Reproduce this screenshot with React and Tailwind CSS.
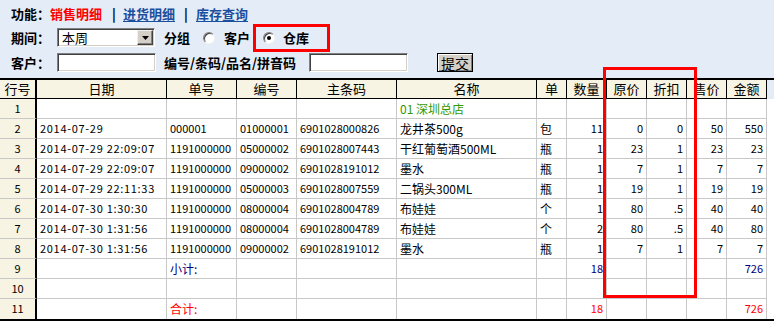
import React from "react";

const COLS = [
  "w-[37px] shrink-0",
  "w-[130px] shrink-0",
  "w-[70px] shrink-0",
  "w-[60px] shrink-0",
  "w-[100px] shrink-0",
  "w-[140px] shrink-0",
  "w-[30px] shrink-0",
  "w-[40px] shrink-0",
  "w-[40px] shrink-0",
  "w-[40px] shrink-0",
  "w-[40px] shrink-0",
  "w-[40px] shrink-0",
];

const HEADERS = ["行号", "日期", "单号", "编号", "主条码", "名称", "单", "数量", "原价", "折扣", "售价", "金额"];

const ALIGN = ["c", "l", "l", "l", "l", "l", "l", "r", "r", "r", "r", "r"];

const ROWS = [
  { cells: ["1", "", "", "", "", "01 深圳总店", "", "", "", "", "", ""], colors: { 5: "text-[#339900]" } },
  { cells: ["2", "2014-07-29", "000001", "01000001", "6901028000826", "龙井茶500g", "包", "11", "0", "0", "50", "550"] },
  { cells: ["3", "2014-07-29 22:09:07", "1191000000", "05000002", "6901028007443", "干红葡萄酒500ML", "瓶", "1", "23", "1", "23", "23"] },
  { cells: ["4", "2014-07-29 22:09:07", "1191000000", "09000002", "6901028191012", "墨水", "瓶", "1", "7", "1", "7", "7"] },
  { cells: ["5", "2014-07-29 22:11:33", "1191000000", "05000003", "6901028007559", "二锅头300ML", "瓶", "1", "19", "1", "19", "19"] },
  { cells: ["6", "2014-07-30 1:30:30", "1191000000", "08000004", "6901028004789", "布娃娃", "个", "1", "80", ".5", "40", "40"] },
  { cells: ["7", "2014-07-30 1:31:56", "1191000000", "08000004", "6901028004789", "布娃娃", "个", "2", "80", ".5", "40", "80"] },
  { cells: ["8", "2014-07-30 1:31:56", "1191000000", "09000002", "6901028191012", "墨水", "瓶", "1", "7", "1", "7", "7"] },
  { cells: ["9", "", "小计:", "", "", "", "", "18", "", "", "", "726"], colors: { 2: "text-[#000080]", 7: "text-[#000080]", 11: "text-[#000080]" } },
  { cells: ["10", "", "", "", "", "", "", "", "", "", "", ""] },
  { cells: ["11", "", "合计:", "", "", "", "", "18", "", "", "", "726"], colors: { 2: "text-[#ff0000]", 7: "text-[#ff0000]", 11: "text-[#ff0000]" } },
];

const isAscii = (s) => /^[\x20-\x7e]+$/.test(s);

function Radio({ checked }) {
  return (
    <span className="w-[12px] h-[12px] shrink-0 rounded-full bg-white border border-t-[#808080] border-l-[#808080] border-b-[#f4f4f4] border-r-[#f4f4f4] shadow-[inset_1px_1px_0_#404040] flex items-center justify-center">
      {checked && <span className="w-[4px] h-[4px] rounded-full bg-black" />}
    </span>
  );
}

function Input({ w }) {
  return (
    <span
      className={
        w +
        " h-[19px] shrink-0 bg-white border border-t-[#808080] border-l-[#808080] border-b-white border-r-white shadow-[inset_1px_1px_0_#404040,inset_-1px_-1px_0_#d4d0c8]"
      }
    />
  );
}

export default function App() {
  return (
    <div
      className="relative w-[774px] h-[327px] bg-white overflow-hidden text-black"
      style={{ fontFamily: '"Noto Sans CJK SC", "Noto Sans", sans-serif' }}
    >
      <div className="h-[78px] bg-[#e4ecf7] pl-[11px] text-[13px] font-bold leading-none">
        <div className="h-[26px] flex items-center">
          <span className="w-[39px] shrink-0">功能：</span>
          <span className="w-[62px] shrink-0 text-[#ff0000]">销售明细</span>
          <span className="w-[11px] shrink-0">|</span>
          <span className="w-[61px] shrink-0 text-[#1c4e9e] underline underline-offset-2">进货明细</span>
          <span className="w-[12px] shrink-0">|</span>
          <span className="shrink-0 text-[#1c4e9e] underline underline-offset-2">库存查询</span>
        </div>
        <div className="mt-[2px] h-[19px] flex items-center">
          <span className="w-[46px] shrink-0">期间：</span>
          <span className="w-[98px] h-[19px] shrink-0 bg-white border border-t-[#808080] border-l-[#808080] border-b-white border-r-white shadow-[inset_1px_1px_0_#404040,inset_-1px_-1px_0_#d4d0c8] flex items-center justify-between pl-[4px] pr-[1px]">
            <span className="font-normal text-[13px]">本周</span>
            <span className="w-[16px] h-[15px] bg-[#d4d0c8] border border-t-[#f0f0f0] border-l-[#f0f0f0] border-b-[#404040] border-r-[#404040] shadow-[inset_-1px_-1px_0_#808080] flex items-center justify-center">
              <svg width="7" height="4" viewBox="0 0 7 4">
                <path d="M0 0h7L3.5 4z" fill="#000" />
              </svg>
            </span>
          </span>
          <span className="ml-[9px] w-[39px] shrink-0">分组</span>
          <Radio />
          <span className="ml-[9px] w-[39px] shrink-0">客户</span>
          <Radio checked />
          <span className="ml-[8px] shrink-0">仓库</span>
        </div>
        <div className="mt-[6px] h-[19px] flex items-center">
          <span className="w-[46px] shrink-0">客户：</span>
          <Input w="w-[99px]" />
          <span className="ml-[8px] w-[145px] shrink-0">编号/条码/品名/拼音码</span>
          <Input w="w-[99px]" />
          <span className="ml-[29px] w-[36px] h-[19px] shrink-0 bg-[#d4d0c8] border border-black shadow-[inset_1px_1px_0_#fff,inset_-1px_-1px_0_#808080] flex items-center justify-center font-normal text-[14px]">
            提交
          </span>
        </div>
      </div>

      <div className="h-[2px] bg-black" />
      <div className="flex h-[19px] bg-[#e4ecf7] text-[13px] leading-[18px]">
        {HEADERS.map((h, i) => (
          <div
            key={i}
            className={
              COLS[i] +
              " h-[19px] bg-[#f7f4e3] border-b border-black text-center " +
              (i === 0 ? "border-r-2" : "border-r")
            }
          >
            {h}
          </div>
        ))}
      </div>
      <div className="bg-white text-[12px] leading-[19px]">
        {ROWS.map((row, ri) => (
          <div key={ri} className="flex h-[20px]">
            {row.cells.map((c, ci) => {
              const last = ri === ROWS.length - 1;
              const align =
                ALIGN[ci] === "c" ? "text-center" : ALIGN[ci] === "r" ? "text-right pr-[3px]" : "text-left pl-[3px]";
              const base =
                ci === 0
                  ? "bg-[#f7f4e3] border-r-2 border-r-black"
                  : "border-r border-r-[#c8c8c8]";
              const color = (row.colors && row.colors[ci]) || "";
              const size = isAscii(c) ? " text-[11px]" : "";
              const track = ci === 1 ? " tracking-[0.7px]" : "";
              return (
                <div
                  key={ci}
                  className={
                    COLS[ci] +
                    " h-[20px] whitespace-nowrap overflow-hidden " +
                    base +
                    " " +
                    align +
                    " " +
                    color +
                    size +
                    track +
                    (last ? "" : " border-b border-b-[#c8c8c8]")
                  }
                >
                  {c}
                </div>
              );
            })}
          </div>
        ))}
      </div>
      <div className="h-[2px] bg-black" />

      <div className="absolute left-[253px] top-[24px] w-[77px] h-[28px] border-[3px] border-[#ff0000]" />
      <div className="absolute left-[603px] top-[67px] w-[94px] h-[231px] border-[3px] border-[#ff0000]" />
    </div>
  );
}
